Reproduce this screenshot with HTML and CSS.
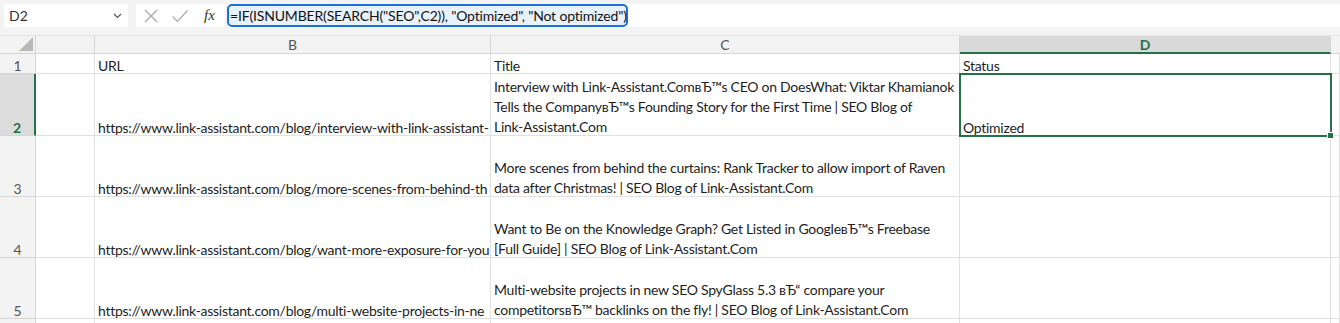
FILE: index.html
```html
<!DOCTYPE html>
<html>
<head>
<meta charset="utf-8">
<link rel="stylesheet" href="styles.css">
</head>
<body>
<div class="toolbar">
  <div class="namebox"><span>D2</span><svg class="chev" width="9" height="6" viewBox="0 0 9 6"><path d="M1 1 L4.5 4.5 L8 1" fill="none" stroke="#555" stroke-width="1.2"/></svg></div>
  <div class="fxbtns">
    <svg width="16" height="16" viewBox="0 0 16 16"><path d="M2 2 L14 14 M14 2 L2 14" stroke="#a8a8a8" stroke-width="1.2" fill="none"/></svg>
    <svg width="18" height="16" viewBox="0 0 18 16"><path d="M1.5 8.5 L6.5 13.5 L16.5 2.5" stroke="#a8a8a8" stroke-width="1.2" fill="none"/></svg>
    <span class="fx">fx</span>
  </div>
  <div class="formula"><span class="ftext">=IF(ISNUMBER(SEARCH("SEO",C2)), "Optimized", "Not optimized")</span></div>
</div>
<div class="sheet">
  <div class="hd corner"><svg width="14" height="14" viewBox="0 0 14 14"><path d="M14 0 L14 14 L0 14 Z" fill="#b9b9b9"/></svg></div>
  <div class="hd col"></div>
  <div class="hd col">B</div>
  <div class="hd col">C</div>
  <div class="hd col sel">D</div>
  <div class="hd col last"></div>

  <div class="hd row"><span>1</span></div>
  <div class="c"></div>
  <div class="c"><span>URL</span></div>
  <div class="c"><span>Title</span></div>
  <div class="c"><span>Status</span></div>
  <div class="c"></div>

  <div class="hd row rsel"><span>2</span></div>
  <div class="c"></div>
  <div class="c"><span>https://www.link-assistant.com/blog/interview-with-link-assistant-</span></div>
  <div class="c wrap"><span>Interview with Link-Assistant.ComвЂ™s CEO on DoesWhat: Viktar Khamianok<br>Tells the CompanyвЂ™s Founding Story for the First Time | SEO Blog of<br>Link-Assistant.Com</span></div>
  <div class="c active"><span>Optimized</span></div>
  <div class="c"></div>

  <div class="hd row"><span>3</span></div>
  <div class="c"></div>
  <div class="c"><span>https://www.link-assistant.com/blog/more-scenes-from-behind-th</span></div>
  <div class="c wrap"><span>More scenes from behind the curtains: Rank Tracker to allow import of Raven<br>data after Christmas! | SEO Blog of Link-Assistant.Com</span></div>
  <div class="c"></div>
  <div class="c"></div>

  <div class="hd row"><span>4</span></div>
  <div class="c"></div>
  <div class="c"><span>https://www.link-assistant.com/blog/want-more-exposure-for-you</span></div>
  <div class="c wrap"><span>Want to Be on the Knowledge Graph? Get Listed in GoogleвЂ™s Freebase<br>[Full Guide] | SEO Blog of Link-Assistant.Com</span></div>
  <div class="c"></div>
  <div class="c"></div>

  <div class="hd row"><span>5</span></div>
  <div class="c"></div>
  <div class="c"><span>https://www.link-assistant.com/blog/multi-website-projects-in-ne</span></div>
  <div class="c wrap"><span>Multi-website projects in new SEO SpyGlass 5.3 вЂ“ compare your<br>competitorsвЂ™ backlinks on the fly! | SEO Blog of Link-Assistant.Com</span></div>
  <div class="c"></div>
  <div class="c"></div>

  <div class="hd row"></div>
  <div class="c"></div>
  <div class="c"></div>
  <div class="c"></div>
  <div class="c"></div>
  <div class="c"></div>
</div>
</body>
</html>
```
FILE: styles.css
```css
* { box-sizing: border-box; }
html, body { margin: 0; padding: 0; background: #fff; }
body {
  width: 1340px;
  height: 323px;
  overflow: hidden;
  font-family: Lato, "Liberation Sans", sans-serif;
  font-size: 14px;
  letter-spacing: -0.27px;
  color: #1e1e1e;
}
.toolbar {
  display: flex;
  height: 36px;
  background: #f3f3f3;
  padding: 4px 0 0 4px;
  border-bottom: 1px solid #e6e6e6;
}
.namebox {
  width: 124px;
  height: 23px;
  background: #fff;
  display: flex;
  align-items: center;
  justify-content: space-between;
  padding: 0 6px 0 5px;
  color: #333;
  letter-spacing: 0;
}
.fxbtns {
  margin-left: 8px;
  width: 89px;
  height: 23px;
  background: #fff;
  display: flex;
  align-items: center;
  padding-left: 7px;
  gap: 12px;
}
.fx {
  font-family: "Liberation Serif", serif;
  font-style: italic;
  font-size: 15px;
  color: #333;
  margin-left: 3px;
  letter-spacing: 0;
}
.formula {
  margin-left: 2px;
  flex: 1;
  height: 23px;
  background: #fff;
  display: flex;
  align-items: center;
}
.ftext {
  display: block;
  height: 23px;
  line-height: 19px;
  width: 401px;
  border: 2px solid #1a72d8;
  border-radius: 5px;
  background: #e8f2fc;
  padding-left: 1px;
  white-space: nowrap;
  color: #111;
  font-size: 14px;
  letter-spacing: -0.17px;
}
.sheet {
  display: grid;
  grid-template-columns: 36px 59px 396px 469px 371px 9px;
  grid-template-rows: 18px 20px 62px 61px 61px 61px 20px;
}
.hd {
  background: #f3f3f3;
  color: #555;
  display: flex;
  align-items: center;
  justify-content: center;
  border-right: 1px solid #d6d6d6;
  border-bottom: 1px solid #d6d6d6;
  font-size: 14px;
  letter-spacing: 0;
}
.corner { justify-content: flex-end; align-items: flex-end; padding: 0 2px 2px 0; }
.col.sel {
  background: #d9d9d9;
  color: #217346;
  font-weight: bold;
  border-bottom: 2px solid #217346;
}
.col.last { border-right: none; }
.row { align-items: flex-end; line-height: 19px; }
.row > span { margin-bottom: -2px; }
.row.rsel {
  background: #dcdcdc;
  color: #217346;
  font-weight: bold;
  border-right: 2px solid #217346;
}
.c {
  border-right: 1px solid #e1e1e1;
  border-bottom: 1px solid #e1e1e1;
  display: flex;
  align-items: flex-end;
  padding: 0 0 0 3px;
  white-space: nowrap;
  overflow: hidden;
  line-height: 19px;
}
.c > span { margin-bottom: -2px; }
.wrap { line-height: 20px; }
.active {
  position: relative;
  overflow: visible;
  outline: 2px solid #217346;
  outline-offset: -1px;
  z-index: 2;
}
.active::after {
  content: "";
  position: absolute;
  right: -4px;
  bottom: -4px;
  width: 5px;
  height: 5px;
  background: #217346;
  border: 1px solid #fff;
}
```
